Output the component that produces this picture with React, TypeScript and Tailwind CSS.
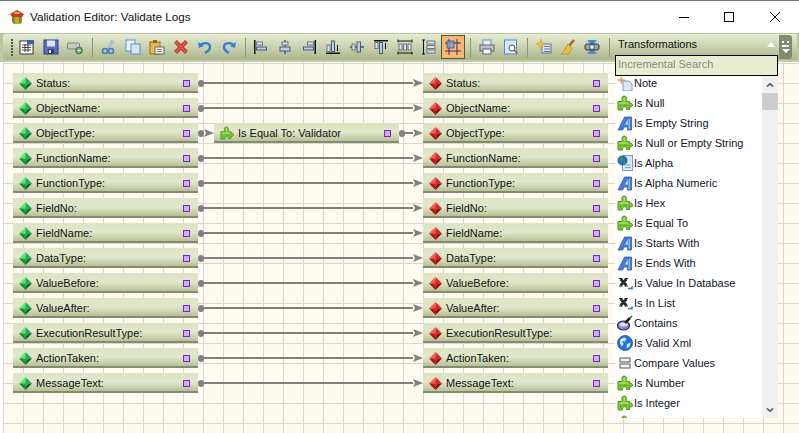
import type { ReactNode } from 'react'

const Ico = ({ children, className = 'w-4 h-4' }: { children: ReactNode; className?: string }) => (
  <svg viewBox="0 0 16 16" className={`${className} shrink-0`}>
    {children}
  </svg>
)

const Gem = ({ red }: { red?: boolean }) => {
  const c = red ? ['#f4605a', '#e02424', '#b01212', '#860c0c'] : ['#62e47e', '#1cb44a', '#0e8c34', '#0a6a28']
  return (
    <Ico className="w-[13px] h-[13px]">
      <polygon points="8,0 16,8 8,8" fill={c[1]} />
      <polygon points="8,0 0,8 8,8" fill={c[0]} />
      <polygon points="0,8 8,16 8,8" fill={c[2]} />
      <polygon points="16,8 8,16 8,8" fill={c[3]} />
      <polygon points="8,4 12,8 8,12 4,8" fill={c[1]} />
      <polygon points="8,4 4,8 8,8" fill={c[0]} />
    </Ico>
  )
}

const Puzzle = ({ className }: { className?: string }) => (
  <Ico className={className}>
    <path
      d="M1 6.5H5.2V4.8C4.2 3 5.2 1 7.2 1S10.2 3 9.2 4.8V6.5H12.5V8.2C14 7.5 15.5 8.6 15.5 10S14 12.5 12.5 11.8V14.5H9.5C10 13 9 11.8 7.5 11.8S5 13 5.5 15H1Z"
      fill="#7cc435"
      stroke="#4a9a1a"
      strokeWidth="1"
    />
    <path d="M2.5 8H11M7.2 2.5V6" stroke="#c4ee86" strokeWidth="1" />
    <path d="M3.5 13V10M6 10.5H11" stroke="#5ea825" strokeWidth="1" />
  </Ico>
)

const BlueA = () => (
  <Ico>
    <path d="M1 15L7.5 2H14.5V15H10.5V12H7.2L5.6 15Z" fill="#3f7ddc" stroke="#24509f" strokeWidth="0.7" />
    <path d="M8.4 9.5H10.6V5H10.4Z" fill="#e6effc" />
    <path d="M12.2 4V14" stroke="#a4c4f4" strokeWidth="1.2" />
  </Ico>
)

const XSub = () => (
  <Ico>
    <path d="M3.5 4L9.5 10.5M9.5 4L3.5 10.5" stroke="#2a2a2a" strokeWidth="2.6" />
    <path d="M2 3.5H5.5M7.5 3.5H11M2 11H5.5M7.5 11H11" stroke="#2a2a2a" strokeWidth="1.2" />
    <path d="M11 13.5H15M15 11.5V14.5" stroke="#2f78d8" strokeWidth="1.6" />
  </Ico>
)

const GlobeDoc = () => (
  <Ico>
    <rect x="5.5" y="0.5" width="10" height="15" fill="#d8e6f6" stroke="#7f9cc4" />
    <path d="M8 10H13.5M8 12.5H13.5" stroke="#8aa4c8" />
    <circle cx="5.5" cy="5.5" r="5" fill="#1e6fc8" />
    <path d="M2.5 3.5L5 2L6.5 4L4.5 7L3 6Z" fill="#3f9e3a" />
    <circle cx="7.5" cy="7.5" r="1.3" fill="#3f9e3a" />
  </Ico>
)

const Contains = () => (
  <Ico>
    <ellipse cx="6.5" cy="10.5" rx="6" ry="4.5" fill="#8d87cf" stroke="#2a2850" strokeWidth="1.2" />
    <ellipse cx="6.5" cy="9.5" rx="4" ry="2" fill="#e2e0f6" />
    <path d="M8 8L13 3" stroke="#222" strokeWidth="2.6" />
    <path d="M12.5 3.5L15 1" stroke="#555" strokeWidth="1.6" />
  </Ico>
)

const Globe = () => (
  <Ico>
    <circle cx="8" cy="8" r="7.5" fill="#1f74e0" stroke="#1550a8" strokeWidth="0.8" />
    <path d="M3.5 4.5C6 2.5 8 2.5 9.5 3.5L8 6.5L5 6L6.5 9L5 11.5C3 9.5 2.5 7 3.5 4.5Z" fill="#dcebff" />
    <path d="M10 9L13.5 7.5C13.5 10.5 12 12.5 9.5 13.5Z" fill="#dcebff" />
  </Ico>
)

const Compare = () => (
  <Ico>
    <rect x="3" y="3" width="10" height="4" fill="#f4f4f4" stroke="#555" />
    <rect x="3" y="9" width="10" height="4" fill="#f4f4f4" stroke="#555" />
  </Ico>
)

const NoteIcon = () => (
  <Ico>
    <path d="M6 6H12L15 9V16H6Z" fill="#dbe8f8" stroke="#7d9cc6" />
    <path d="M4 1.5L5 4.5L8 5L5 6L4.5 9L3.5 6L0.5 5L3.5 4.5Z" fill="#f2a92c" stroke="#b9761a" strokeWidth="0.4" />
  </Ico>
)

const items: { label: string; icon: ReactNode }[] = [
  { label: 'Note', icon: <NoteIcon /> },
  { label: 'Is Null', icon: <Puzzle /> },
  { label: 'Is Empty String', icon: <BlueA /> },
  { label: 'Is Null or Empty String', icon: <Puzzle /> },
  { label: 'Is Alpha', icon: <GlobeDoc /> },
  { label: 'Is Alpha Numeric', icon: <BlueA /> },
  { label: 'Is Hex', icon: <Puzzle /> },
  { label: 'Is Equal To', icon: <Puzzle /> },
  { label: 'Is Starts With', icon: <BlueA /> },
  { label: 'Is Ends With', icon: <BlueA /> },
  { label: 'Is Value In Database', icon: <XSub /> },
  { label: 'Is In List', icon: <XSub /> },
  { label: 'Contains', icon: <Contains /> },
  { label: 'Is Valid Xml', icon: <Globe /> },
  { label: 'Compare Values', icon: <Compare /> },
  { label: 'Is Number', icon: <Puzzle /> },
  { label: 'Is Integer', icon: <Puzzle /> },
  { label: '', icon: <Puzzle /> },
]

const fields = [
  'Status',
  'ObjectName',
  'ObjectType',
  'FunctionName',
  'FunctionType',
  'FieldNo',
  'FieldName',
  'DataType',
  'ValueBefore',
  'ValueAfter',
  'ExecutionResultType',
  'ActionTaken',
  'MessageText',
]

const Port = () => <span className="ml-auto w-[7px] h-[7px] border border-[#7a22cc] bg-[#cdb0f2] shrink-0" />

const Node = ({ children }: { children: ReactNode }) => (
  <div className="w-[185px] h-5 shrink-0 flex items-center pt-0.5 pl-1.5 pr-2 gap-1 border-b-2 border-[#838c70] bg-gradient-to-b from-[#dde4c4] via-[#e1e7cb] to-[#b8c194] text-[#111]">
    {children}
  </div>
)

const Wire = ({ className }: { className: string }) => (
  <div className={`flex items-center h-5 shrink-0 ${className}`}>
    <span className="w-1.5 h-[7px] rounded-sm bg-[#808080] shrink-0" />
    <span className="flex-1 h-0.5 bg-[#808080]" />
    <svg viewBox="0 0 10 10" className="w-2.5 h-2.5 shrink-0">
      <path d="M0 1L10 5L0 9L2 5Z" fill="#808080" />
    </svg>
  </div>
)

const box = { fill: '#b9cdea', stroke: '#44597f', strokeWidth: 1 }
const gbox = { fill: '#dfe3e8', stroke: '#6d7480', strokeWidth: 1 }

const Btn = ({ children, active }: { children: ReactNode; active?: boolean }) => (
  <div
    className={`w-6 h-6 shrink-0 flex items-center justify-center ${active ? 'bg-[#ffb56e] border border-[#3f6045]' : ''}`}
  >
    {children}
  </div>
)

const Sep = ({ className }: { className: string }) => (
  <div className={`h-[19px] flex justify-center shrink-0 ${className}`}>
    <span className="w-px h-full bg-[#8b9473]" />
  </div>
)

const Toolbar = () => (
  <div className="h-[29px] pl-[3px] pr-[2px] flex bg-gradient-to-b from-[#b9c49a] to-[#c2cba5]">
    <div className="flex-1 h-[26px] mt-px flex items-center rounded-l-[3px] bg-gradient-to-b from-[#e8edd3] to-[#aab68a] pl-2 pr-[5px]">
      <div className="w-1 shrink-0 flex flex-col gap-px">
        {[0, 1, 2, 3, 4, 5].map((i) => (
          <span key={i} className="w-0.5 h-0.5 bg-[#555]" />
        ))}
      </div>
      <Btn>
        <Ico>
          <rect x="1" y="2" width="13" height="13" fill="#fff" stroke="#333" />
          <rect x="8" y="1" width="7" height="4" fill="#3a5fb0" />
          <path d="M3 6H12M3 8.5H12M3 11H12M6 5V13M9 5V13" stroke="#333" strokeWidth="0.9" />
        </Ico>
      </Btn>
      <Btn>
        <Ico>
          <rect x="1" y="1" width="14" height="14" fill="#5a6cc8" stroke="#2f3a86" />
          <rect x="4" y="1.5" width="8" height="6" fill="#dfe5f5" />
          <rect x="5" y="10" width="6" height="5" fill="#333a66" />
          <rect x="6" y="11" width="2" height="3" fill="#dfe5f5" />
        </Ico>
      </Btn>
      <Btn>
        <Ico>
          <rect x="0.5" y="4" width="12" height="6" rx="1" fill="#c4c8c4" stroke="#7f837f" />
          <circle cx="12" cy="11.5" r="3.5" fill="#4f9a4f" stroke="#366" strokeWidth="0.5" />
          <path d="M10 11.5H14M12 9.5V13.5" stroke="#fff" strokeWidth="1" />
        </Ico>
      </Btn>
      <Sep className="w-2.5" />
      <Btn>
        <Ico>
          <path d="M11 1L7 9M13 2L6 11" stroke="#a8bcd2" strokeWidth="1.6" />
          <circle cx="4" cy="12" r="2.5" fill="none" stroke="#3f78cc" strokeWidth="1.6" />
          <circle cx="10" cy="12" r="2.5" fill="none" stroke="#3f78cc" strokeWidth="1.6" />
        </Ico>
      </Btn>
      <Btn>
        <Ico>
          <rect x="1" y="1" width="9" height="11" fill="#eaf2fb" stroke="#5b8fd0" />
          <rect x="6" y="5" width="9" height="10" fill="#d6e6f8" stroke="#5b8fd0" />
        </Ico>
      </Btn>
      <Btn>
        <Ico>
          <rect x="1" y="3" width="10" height="12" fill="#e8b84a" stroke="#8a6a1e" />
          <rect x="4" y="1" width="4" height="3" fill="#8a6a1e" />
          <rect x="6" y="8" width="9" height="7" fill="#f2f2f2" stroke="#6a6a6a" />
          <path d="M8 10.5H13M8 12.5H13" stroke="#777" />
        </Ico>
      </Btn>
      <Btn>
        <Ico>
          <path d="M2.5 2.5L13.5 13.5M13.5 2.5L2.5 13.5" stroke="#b8322e" strokeWidth="4" />
          <path d="M2.5 2.5L13.5 13.5M13.5 2.5L2.5 13.5" stroke="#e0524c" strokeWidth="2.2" />
        </Ico>
      </Btn>
      <Btn>
        <Ico>
          <path d="M3 7C5 3 13 3 13 8C13 11 10 13 8 14" fill="none" stroke="#2f7fd8" strokeWidth="2.4" />
          <path d="M1 3L2 9L7 7Z" fill="#2f7fd8" />
        </Ico>
      </Btn>
      <Btn>
        <Ico>
          <path d="M13 7C11 3 3 3 3 8C3 11 6 13 8 14" fill="none" stroke="#2f7fd8" strokeWidth="2.4" />
          <path d="M15 3L14 9L9 7Z" fill="#2f7fd8" />
        </Ico>
      </Btn>
      <Sep className="w-2" />
      <Btn>
        <Ico>
          <rect x="1" y="1" width="1.5" height="14" fill="#111" />
          <rect x="3.5" y="3" width="6" height="3" {...gbox} />
          <rect x="3.5" y="8" width="10" height="3" {...box} />
        </Ico>
      </Btn>
      <Btn>
        <Ico>
          <rect x="7.5" y="1" width="1" height="14" fill="#222" />
          <rect x="5" y="3" width="6" height="3" {...gbox} />
          <rect x="3" y="8" width="10" height="4" {...box} />
        </Ico>
      </Btn>
      <Btn>
        <Ico>
          <rect x="13.5" y="1" width="1.5" height="14" fill="#111" />
          <rect x="6.5" y="3" width="6" height="3" {...gbox} />
          <rect x="2.5" y="8" width="10" height="3" {...box} />
        </Ico>
      </Btn>
      <Btn>
        <Ico>
          <rect x="1" y="13.5" width="14" height="1.5" fill="#111" />
          <rect x="2" y="6" width="3" height="6.5" {...gbox} />
          <rect x="6.5" y="2" width="3" height="10.5" {...box} />
          <path d="M12.5 6V12" stroke="#111" />
        </Ico>
      </Btn>
      <Btn>
        <Ico>
          <rect x="1" y="7.5" width="14" height="1" fill="#111" />
          <rect x="3" y="5" width="3" height="6" {...gbox} />
          <rect x="8" y="3" width="3.5" height="10" {...box} />
        </Ico>
      </Btn>
      <Btn>
        <Ico>
          <rect x="1" y="1" width="14" height="1.5" fill="#111" />
          <rect x="2" y="3.5" width="3" height="6" {...gbox} />
          <rect x="6.5" y="3.5" width="3" height="11" {...box} />
          <path d="M12.5 4V10" stroke="#111" />
        </Ico>
      </Btn>
      <Btn>
        <Ico>
          <path d="M1 2H15M1 14H15M1 0.5V3.5M15 0.5V3.5M1 12.5V15.5M15 12.5V15.5" stroke="#111" />
          <rect x="2" y="5" width="3" height="6" {...gbox} />
          <rect x="6.5" y="5" width="3" height="6" {...gbox} />
          <rect x="11" y="5" width="3" height="6" {...gbox} />
        </Ico>
      </Btn>
      <Btn>
        <Ico>
          <path d="M2.5 1V15M1 1H4M1 15H4" stroke="#111" />
          <rect x="6" y="2" width="8" height="3" {...gbox} />
          <rect x="6" y="6.5" width="8" height="3" {...gbox} />
          <rect x="6" y="11" width="8" height="3" {...gbox} />
        </Ico>
      </Btn>
      <Btn active>
        <Ico>
          <path d="M4 0V16M12 0V16M0 4H16M0 12H16" stroke="#23357f" />
          <rect x="2" y="2" width="7" height="7" fill="#6fa2dc" fillOpacity="0.8" stroke="#23357f" strokeWidth="0.6" />
        </Ico>
      </Btn>
      <Sep className="w-2.5" />
      <Btn>
        <Ico>
          <rect x="4" y="1" width="8" height="6" fill="#e8f0fa" stroke="#5b8fd0" />
          <rect x="1" y="6" width="14" height="6" fill="#b8c0cc" stroke="#5a6472" />
          <rect x="4" y="10" width="8" height="5" fill="#f4f6fa" stroke="#5a6472" />
        </Ico>
      </Btn>
      <Btn>
        <Ico>
          <rect x="1.5" y="1" width="12" height="14" fill="#d9e8f8" stroke="#4f8fd8" />
          <circle cx="9" cy="9" r="3" fill="#f4f8fc" stroke="#555" />
          <path d="M11 11L14.5 14.5" stroke="#a05a20" strokeWidth="1.6" />
        </Ico>
      </Btn>
      <Sep className="w-[9px]" />
      <Btn>
        <Ico>
          <rect x="6" y="5" width="9" height="9" fill="#dce6f4" stroke="#5a74a0" />
          <path d="M8 7.5H14M8 10H14M8 12.5H14" stroke="#5a74a0" />
          <path d="M5 0L6 4L10 5L6 6.5L5 11L3.5 6.5L0 5L3.5 4Z" fill="#f6c32c" stroke="#c68a12" strokeWidth="0.4" />
        </Ico>
      </Btn>
      <Btn>
        <Ico>
          <path d="M14 1L9 7" stroke="#a85f20" strokeWidth="2.4" />
          <path d="M8 5L12 9L9 15L1 15C4 13 5 10 8 5Z" fill="#eabf3a" stroke="#b08518" strokeWidth="0.7" />
        </Ico>
      </Btn>
      <Btn>
        <Ico>
          <path d="M3 1H13L9.5 5H6.5ZM3 15H13L9.5 11H6.5Z" fill="#3f8fe0" />
          <rect x="1" y="5" width="14" height="6" rx="2" fill="#9aa4ac" stroke="#333" />
          <rect x="6" y="6" width="4" height="4" fill="#e8eef2" stroke="#333" strokeWidth="0.6" />
        </Ico>
      </Btn>
      <Sep className="w-[11px]" />
      <div className="ml-auto w-[13px] h-6 shrink-0 rounded-r-[3px] bg-[#7f8c6a] flex flex-col items-center justify-center gap-0.5">
        <span className="w-[7px] h-0.5 border-x-2 border-white" />
        <span className="w-[7px] h-0.5 bg-white" />
        <span className="w-0 h-0 border-x-[4px] border-x-transparent border-t-[4px] border-t-white" />
      </div>
    </div>
  </div>
)

const Panel = () => (
  <div className="absolute left-[615px] top-[35px] w-[163px] text-[11px]">
    <div className="h-5 flex items-center justify-between pb-0.5 px-[3px] text-[#111]">
      <span>Transformations</span>
      <span className="w-0 h-0 border-x-[4px] border-x-transparent border-b-[5px] border-b-white" />
    </div>
    <div className="h-[21px] flex items-center border border-black bg-[#e8edd0] pl-0.5 pb-0.5 text-[#8a8a8a]">
      Incremental Search
    </div>
    <div className="h-[342px] flex overflow-hidden bg-white">
      <div className="flex-1 -mt-[3px] text-[#10142a]">
        {items.map((it, i) => (
          <div key={i} className="h-5 flex items-center pl-0.5 gap-px whitespace-nowrap">
            {it.icon}
            {it.label && <span>{it.label}</span>}
          </div>
        ))}
      </div>
      <div className="w-4 flex flex-col items-center bg-[#f0f0f0]">
        <svg viewBox="0 0 10 6" className="w-2 h-[6px] mt-1.5 mb-[5px]">
          <path d="M1 5L5 1.5L9 5" fill="none" stroke="#606060" strokeWidth="2" />
        </svg>
        <span className="w-full h-[17px] bg-[#cdcdcd]" />
        <svg viewBox="0 0 10 6" className="w-2 h-[6px] mt-auto mb-[5px]">
          <path d="M1 1L5 4.5L9 1" fill="none" stroke="#606060" strokeWidth="2" />
        </svg>
      </div>
    </div>
  </div>
)

export default function App() {
  return (
    <div className="relative w-[799px] h-[433px] overflow-hidden bg-white flex flex-col font-['Liberation_Sans',Tahoma,sans-serif]">
      {/* Title bar */}
      <div className="h-[33px] shrink-0 flex items-center pl-[9px] border-t border-[#777]">
        <svg viewBox="0 0 16 16" className="w-4 h-4 shrink-0">
          <rect x="3" y="4" width="10" height="11" rx="3" fill="#6f9a1e" />
          <rect x="6" y="4" width="4" height="11" fill="#c9a91e" />
          <path d="M1 5L8 1L15 5L13 8H3Z" fill="#d8302a" />
          <rect x="5.5" y="3" width="5" height="2" fill="#e8c23a" />
        </svg>
        <span className="ml-[5px] text-[11.7px] text-[#111]">Validation Editor: Validate Logs</span>
        <div className="ml-auto flex items-center">
          <span className="w-2.5 h-px bg-black mr-[35px]" />
          <span className="w-2.5 h-2.5 border border-black mr-9" />
          <svg viewBox="0 0 10 10" className="w-2.5 h-2.5 mr-[19px]">
            <path d="M0 0L10 10M10 0L0 10" stroke="#111" strokeWidth="1" />
          </svg>
        </div>
      </div>

      <Toolbar />

      {/* Canvas */}
      <div className="flex-1 ml-[3px] pt-[11px] flex flex-col gap-[5px] text-[11px] bg-[#fffbf0] bg-[linear-gradient(#d9d6cf_1px,transparent_1px),linear-gradient(90deg,#d9d6cf_1px,transparent_1px)] bg-[size:20px_20px] bg-[position:0_1px]">
        {fields.map((f) => (
          <div key={f} className="h-5 flex pl-2.5">
            <Node>
              <Gem />
              <span>{f}:</span>
              <Port />
            </Node>
            {f === 'ObjectType' ? (
              <>
                <Wire className="w-4" />
                <Node>
                  <Puzzle className="w-3.5 h-3.5" />
                  <span>Is Equal To: Validator</span>
                  <Port />
                </Node>
                <Wire className="w-6" />
              </>
            ) : (
              <Wire className="w-[225px]" />
            )}
            <Node>
              <Gem red />
              <span>{f}:</span>
              <Port />
            </Node>
          </div>
        ))}
      </div>

      <Panel />
    </div>
  )
}
